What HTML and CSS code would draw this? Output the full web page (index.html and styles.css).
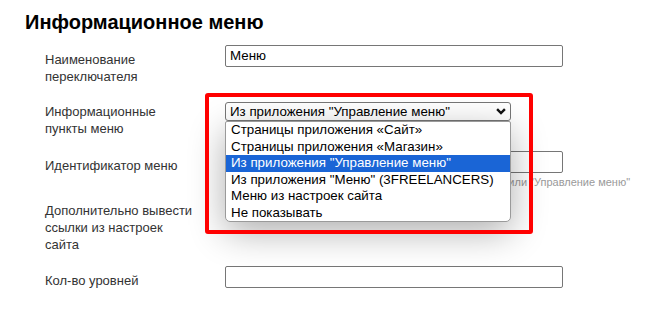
FILE: index.html
```html
<!DOCTYPE html>
<html lang="ru">
<head>
<meta charset="utf-8">
<link rel="stylesheet" href="styles.css">
</head>
<body>
<div class="page">
  <h1 class="title">Информационное меню</h1>
  <div class="form">
    <div class="row row-1">
      <div class="label">Наименование переключателя</div>
      <div class="field"><div class="input">Меню</div></div>
    </div>
    <div class="row row-2">
      <div class="label">Информационные пункты меню</div>
      <div class="field field-select">
        <div class="select">
          <span>Из приложения "Управление меню"</span>
          <svg class="chev" width="10" height="7" viewBox="0 0 10 7"><path d="M1.1 1.2 L5 5.1 L8.9 1.2" fill="none" stroke="#111" stroke-width="2.4"/></svg>
        </div>
        <ul class="popup">
          <li>Страницы приложения «Сайт»</li>
          <li>Страницы приложения «Магазин»</li>
          <li class="active">Из приложения "Управление меню"</li>
          <li>Из приложения "Меню" (3FREELANCERS)</li>
          <li>Меню из настроек сайта</li>
          <li>Не показывать</li>
        </ul>
      </div>
    </div>
    <div class="row row-3">
      <div class="label">Идентификатор меню</div>
      <div class="field">
        <div class="input"></div>
        <div class="hint">Укажите идентификатор меню из приложения «Меню» или "Управление меню"</div>
      </div>
    </div>
    <div class="row row-4">
      <div class="label">Дополнительно вывести ссылки из настроек сайта</div>
      <div class="field"><span class="check"></span></div>
    </div>
    <div class="row row-5">
      <div class="label">Кол-во уровней</div>
      <div class="field"><div class="input"></div></div>
    </div>
  </div>
  <div class="frame"></div>
</div>
</body>
</html>
```

FILE: styles.css
```css
* { box-sizing: border-box; }
html, body { margin: 0; background: #fff; }
body { font-family: "Liberation Sans", Arial, sans-serif; }
.page { position: relative; width: 646px; height: 309px; overflow: hidden; padding-left: 25px; }
.title { margin: 0; padding-top: 11px; font-size: 20px; line-height: 23px; font-weight: bold; color: #000; }
.form { margin-top: 11px; padding-left: 20px; }
.row { display: grid; grid-template-columns: 155px 1fr; column-gap: 25px; align-items: start; }
.row-1 { margin-bottom: 12px; }
.row-2 { margin-bottom: 14px; }
.row-3 { margin-bottom: 7px; }
.row-4 { margin-bottom: 13px; }
.label { padding-top: 6px; font-size: 13px; line-height: 17px; color: #333; }
.field { position: relative; }
.input { width: 338px; height: 22px; border: 1px solid #767676; border-radius: 2px; padding: 0 4px; font-size: 13.33px; line-height: 20px; color: #000; }
.field-select { padding-top: 5px; }
.select { width: 286px; height: 19px; border: 1px solid #767676; border-radius: 3px; padding: 0 4px; display: flex; align-items: center; justify-content: space-between; font-size: 13.33px; line-height: 17px; color: #000; background: #fff; }
.popup { position: absolute; left: 0; top: 24px; width: 286px; margin: 0; padding: 0; list-style: none; background: #fff; border: 1px solid #9a9a9a; border-radius: 2px 2px 5px 5px; box-shadow: 0 10px 36px rgba(0,0,0,0.32); z-index: 2; }
.popup li { height: 16.5px; line-height: 16.5px; padding-left: 5px; font-size: 13.33px; color: #000; white-space: nowrap; }
.popup li.active { background: #1a65d6; color: #fff; }
.hint { margin-top: 3px; font-size: 11px; line-height: 13px; color: #9a9a9a; white-space: nowrap; }
.check { display: block; width: 13px; height: 13px; margin-top: 6px; border: 1px solid #767676; border-radius: 2px; }
.frame { position: absolute; left: 205px; top: 93px; width: 328px; height: 141px; border: 4px solid #ff0000; border-radius: 3px; z-index: 3; }
```
